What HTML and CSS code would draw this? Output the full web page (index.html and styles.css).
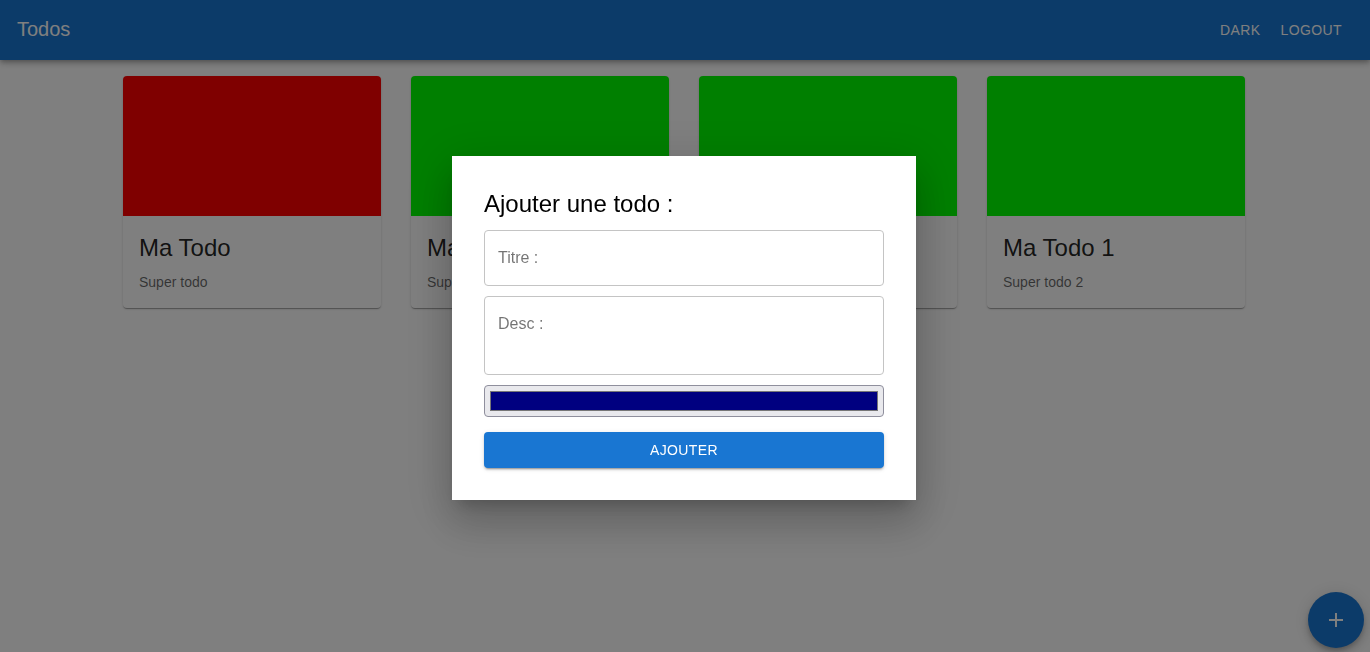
FILE: index.html
```html
<!DOCTYPE html>
<html lang="fr">
<head>
<meta charset="utf-8">
<title>Todos</title>
<link rel="stylesheet" href="styles.css">
</head>
<body>
<header class="appbar">
  <div class="brand">Todos</div>
  <nav class="actions">
    <button class="nav-btn">Dark</button>
    <button class="nav-btn">Logout</button>
  </nav>
</header>
<main class="cards">
  <article class="card">
    <div class="card-media red"></div>
    <div class="card-content">
      <h2 class="card-title">Ma Todo</h2>
      <p class="card-desc">Super todo</p>
    </div>
  </article>
  <article class="card">
    <div class="card-media green"></div>
    <div class="card-content">
      <h2 class="card-title">Ma Todo</h2>
      <p class="card-desc">Super todo</p>
    </div>
  </article>
  <article class="card">
    <div class="card-media green"></div>
    <div class="card-content">
      <h2 class="card-title">Ma Todo</h2>
      <p class="card-desc">Super todo</p>
    </div>
  </article>
  <article class="card">
    <div class="card-media green"></div>
    <div class="card-content">
      <h2 class="card-title">Ma Todo 1</h2>
      <p class="card-desc">Super todo 2</p>
    </div>
  </article>
</main>
<button class="fab" aria-label="add">
  <svg width="24" height="24" viewBox="0 0 24 24"><path d="M19 13h-6v6h-2v-6H5v-2h6V5h2v6h6v2z" fill="#fff"/></svg>
</button>
<div class="backdrop"></div>
<div class="modal-wrap">
  <form class="modal">
    <h2 class="modal-title">Ajouter une todo :</h2>
    <div class="field"><span class="placeholder">Titre :</span></div>
    <div class="field field-multi"><span class="placeholder">Desc :</span></div>
    <div class="color-input"><span class="swatch"></span></div>
    <button type="button" class="submit">Ajouter</button>
  </form>
</div>
</body>
</html>
```
FILE: styles.css
```css
* { box-sizing: border-box; }
html, body { margin: 0; padding: 0; }
body {
  font-family: "Liberation Sans", Arial, sans-serif;
  background: #fff;
  width: 1370px;
  height: 652px;
  overflow: hidden;
}
.appbar {
  height: 60px;
  background: #1976d2;
  color: #fff;
  display: flex;
  align-items: center;
  justify-content: space-between;
  padding: 0 17px;
  box-shadow: 0 2px 4px -1px rgba(0,0,0,0.2), 0 4px 5px 0 rgba(0,0,0,0.14), 0 1px 10px 0 rgba(0,0,0,0.12);
}
.brand { font-size: 20px; line-height: 32px; margin-bottom: 2px; }
.actions { display: flex; gap: 4px; margin-right: 3px; }
.nav-btn {
  background: none;
  border: 0;
  color: #fff;
  font-family: inherit;
  font-size: 14px;
  letter-spacing: 0.4px;
  text-transform: uppercase;
  padding: 6px 8px;
  line-height: 24px;
}
.cards {
  display: flex;
  justify-content: center;
  gap: 30px;
  padding: 16px 2px 0 0;
}
.card {
  width: 258px;
  background: #fff;
  border-radius: 4px;
  overflow: hidden;
  box-shadow: 0 2px 1px -1px rgba(0,0,0,0.2), 0 1px 1px 0 rgba(0,0,0,0.14), 0 1px 3px 0 rgba(0,0,0,0.12);
}
.card-media { height: 140px; }
.red { background: #ff0000; }
.green { background: #00ff00; }
.card-content { padding: 16px; }
.card-title {
  margin: 0 0 8px;
  font-size: 24px;
  font-weight: 400;
  line-height: 32px;
  color: rgba(0,0,0,0.87);
}
.card-desc {
  margin: 0;
  font-size: 14px;
  line-height: 20px;
  color: rgba(0,0,0,0.6);
}
.fab {
  position: fixed;
  right: 6px;
  bottom: 4px;
  width: 56px;
  height: 56px;
  border-radius: 50%;
  border: 0;
  background: #1976d2;
  display: flex;
  align-items: center;
  justify-content: center;
  padding: 0;
  box-shadow: 0 3px 5px -1px rgba(0,0,0,0.2), 0 6px 10px 0 rgba(0,0,0,0.14), 0 1px 18px 0 rgba(0,0,0,0.12);
}
.backdrop {
  position: fixed;
  inset: 0;
  background: rgba(0,0,0,0.5);
}
.modal-wrap {
  position: fixed;
  inset: 0;
  display: flex;
  align-items: center;
  justify-content: center;
  padding: 4px 2px 0 0;
}
.modal {
  width: 464px;
  background: #fff;
  padding: 32px;
  display: flex;
  flex-direction: column;
  gap: 10px;
  box-shadow: 0 11px 15px -7px rgba(0,0,0,0.2), 0 24px 38px 3px rgba(0,0,0,0.14), 0 9px 46px 8px rgba(0,0,0,0.12);
}
.modal-title {
  margin: 0;
  font-size: 24px;
  font-weight: 400;
  line-height: 32px;
  color: #000;
}
.field {
  height: 56px;
  border: 1px solid #c4c4c4;
  border-radius: 4px;
  padding: 15px 13px;
  font-size: 16px;
  line-height: 23px;
}
.field-multi { height: 79px; }
.placeholder { color: rgba(0,0,0,0.55); }
.color-input {
  height: 32px;
  border: 1px solid #8f8f9d;
  border-radius: 4px;
  background: #e9e9ed;
  padding: 5px;
  display: flex;
}
.swatch {
  flex: 1;
  background: #000080;
  border: 1px solid #777;
}
.submit {
  margin-top: 5px;
  height: 36px;
  border: 0;
  border-radius: 4px;
  background: #1976d2;
  color: #fff;
  font-family: inherit;
  font-size: 14px;
  font-weight: 500;
  letter-spacing: 0.4px;
  text-transform: uppercase;
  box-shadow: 0 3px 1px -2px rgba(0,0,0,0.2), 0 2px 2px 0 rgba(0,0,0,0.14), 0 1px 5px 0 rgba(0,0,0,0.12);
}
```
